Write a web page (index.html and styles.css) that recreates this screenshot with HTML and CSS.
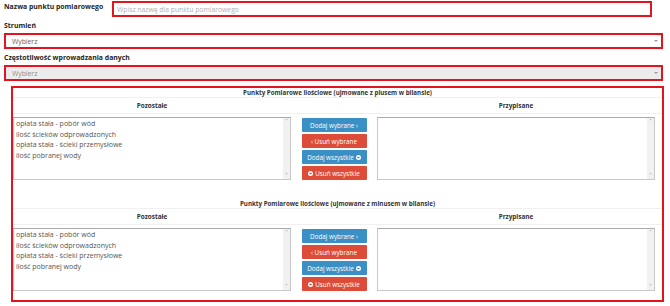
FILE: index.html
```html
<!DOCTYPE html>
<html lang="pl">
<head>
    <meta charset="UTF-8">
    <meta name="viewport" content="width=device-width, initial-scale=1.0">
    <title>Punkt pomiarowy</title>
    <link rel="stylesheet" href="styles.css">
</head>
<body>
    <div class="form">
        <div class="row-inline">
            <label class="lbl lbl-side" for="nazwa">Nazwa punktu pomiarowego</label>
            <input id="nazwa" class="text-input outlined" type="text" placeholder="Wpisz nazwę dla punktu pomiarowego">
        </div>

        <div class="field">
            <label class="lbl" for="strumien">Strumień</label>
            <div class="select-wrap outlined">
                <select id="strumien" class="select">
                    <option>Wybierz</option>
                </select>
            </div>
        </div>

        <div class="field">
            <label class="lbl" for="czestotliwosc">Częstotliwość wprowadzania danych</label>
            <div class="select-wrap outlined disabled">
                <select id="czestotliwosc" class="select" disabled>
                    <option>Wybierz</option>
                </select>
            </div>
        </div>

        <div class="dual-box outlined">
            <div class="section">
                <div class="section-title">Punkty Pomiarowe ilościowe (ujmowane z plusem w bilansie)</div>
                <div class="cols head">
                    <div>Pozostałe</div>
                    <div></div>
                    <div>Przypisane</div>
                </div>
                <div class="cols">
                    <div class="listbox">
                        <div class="items">
                            <div>opłata stała - pobór wód</div>
                            <div>ilość ścieków odprowadzonych</div>
                            <div>opłata stała - ścieki przemysłowe</div>
                            <div>ilość pobranej wody</div>
                        </div>
                        <div class="scrollbar"><span>&#708;</span><span>&#709;</span></div>
                    </div>
                    <div class="btns">
                        <button class="btn btn-blue">Dodaj wybrane &rsaquo;</button>
                        <button class="btn btn-red">&lsaquo; Usuń wybrane</button>
                        <button class="btn btn-blue">Dodaj wszystkie
                            <svg class="ico" viewBox="0 0 10 10"><circle cx="5" cy="5" r="5" fill="#fff"/><path d="M2.5 4.2h2.6V2.6L7.6 5 5.1 7.4V5.8H2.5z" fill="#3a8fc4"/></svg>
                        </button>
                        <button class="btn btn-red">
                            <svg class="ico" viewBox="0 0 10 10"><circle cx="5" cy="5" r="5" fill="#fff"/><path d="M7.5 4.2H4.9V2.6L2.4 5l2.5 2.4V5.8h2.6z" fill="#dd4b39"/></svg>
                            Usuń wszystkie</button>
                    </div>
                    <div class="listbox">
                        <div class="items"></div>
                        <div class="scrollbar"><span>&#708;</span><span>&#709;</span></div>
                    </div>
                </div>
            </div>

            <div class="section">
                <div class="section-title">Punkty Pomiarowe ilościowe (ujmowane z minusem w bilansie)</div>
                <div class="cols head">
                    <div>Pozostałe</div>
                    <div></div>
                    <div>Przypisane</div>
                </div>
                <div class="cols">
                    <div class="listbox">
                        <div class="items">
                            <div>opłata stała - pobór wód</div>
                            <div>ilość ścieków odprowadzonych</div>
                            <div>opłata stała - ścieki przemysłowe</div>
                            <div>ilość pobranej wody</div>
                        </div>
                        <div class="scrollbar"><span>&#708;</span><span>&#709;</span></div>
                    </div>
                    <div class="btns">
                        <button class="btn btn-blue">Dodaj wybrane &rsaquo;</button>
                        <button class="btn btn-red">&lsaquo; Usuń wybrane</button>
                        <button class="btn btn-blue">Dodaj wszystkie
                            <svg class="ico" viewBox="0 0 10 10"><circle cx="5" cy="5" r="5" fill="#fff"/><path d="M2.5 4.2h2.6V2.6L7.6 5 5.1 7.4V5.8H2.5z" fill="#3a8fc4"/></svg>
                        </button>
                        <button class="btn btn-red">
                            <svg class="ico" viewBox="0 0 10 10"><circle cx="5" cy="5" r="5" fill="#fff"/><path d="M7.5 4.2H4.9V2.6L2.4 5l2.5 2.4V5.8h2.6z" fill="#dd4b39"/></svg>
                            Usuń wszystkie</button>
                    </div>
                    <div class="listbox">
                        <div class="items"></div>
                        <div class="scrollbar"><span>&#708;</span><span>&#709;</span></div>
                    </div>
                </div>
            </div>
        </div>
    </div>
</body>
</html>
```

FILE: styles.css
```css
* {
    box-sizing: border-box;
}
body {
    margin: 0;
    padding: 1px 7px 0 4px;
    font-family: "Open Sans", "DejaVu Sans", sans-serif;
    font-size: 7px;
    color: #444;
    background: #fff;
}
.outlined {
    border: 2px solid #e3141e;
}
.lbl {
    display: block;
    font-weight: bold;
    color: #1e1e1e;
    line-height: 8px;
    font-size: 6.9px;
}
.row-inline {
    display: flex;
    align-items: flex-start;
}
.lbl-side {
    width: 108px;
    padding-top: 2px;
}
.text-input {
    width: 540px;
    height: 16px;
    padding: 0 3px;
    font-family: inherit;
    font-size: 6.8px;
    color: #555;
    background: #fff;
    outline: none;
}
.text-input::placeholder {
    color: #b0b0b0;
}
.field {
    margin-top: 5px;
}
.field .lbl {
    margin-bottom: 3px;
}
.select-wrap {
    position: relative;
    height: 16px;
    background: #fff;
}
.select-wrap.disabled {
    background: #ececec;
}
.select-wrap::after {
    content: "";
    position: absolute;
    right: 3px;
    top: 5px;
    border-left: 2px solid transparent;
    border-right: 2px solid transparent;
    border-top: 2px solid #999;
}
.select {
    appearance: none;
    -webkit-appearance: none;
    width: 100%;
    height: 100%;
    border: none;
    background: transparent;
    padding: 0 6px;
    font-family: inherit;
    font-size: 6.8px;
    color: #666;
    outline: none;
}
.dual-box {
    margin: 5px -1px 0 7px;
    padding-bottom: 9px;
}
.section + .section {
    margin-top: 19px;
}
.section-title {
    text-align: center;
    font-weight: bold;
    font-size: 6.2px;
    color: #333;
    line-height: 9px;
    border-bottom: 1px solid #f0f0f0;
}
.cols {
    display: grid;
    grid-template-columns: 278px 86px 278px;
}
.head {
    text-align: center;
    font-weight: bold;
    font-size: 6.4px;
    color: #333;
    line-height: 15px;
    border-bottom: 1px solid #f0f0f0;
    margin-bottom: 3px;
}
.listbox {
    display: flex;
    height: 63px;
    border: 1px solid #c8c8c8;
    border-top-color: #aaa;
    background: #fff;
}
.items {
    flex: 1;
    padding: 1px 2px 0;
    line-height: 10.5px;
    color: #555;
}
.scrollbar {
    width: 7px;
    background: #f1f1f1;
    display: flex;
    flex-direction: column;
    justify-content: space-between;
    align-items: center;
    font-size: 5px;
    line-height: 7px;
    color: #777;
}
.btns {
    display: flex;
    flex-direction: column;
    align-items: center;
    gap: 2px;
    padding-top: 1px;
}
.btn {
    width: 65px;
    height: 14px;
    border: none;
    border-radius: 1px;
    padding: 0;
    font-family: inherit;
    font-size: 6.3px;
    color: #fff;
    display: flex;
    align-items: center;
    justify-content: center;
    gap: 2px;
}
.btn-blue {
    background: #3a8fc4;
}
.btn-red {
    background: #dd4b39;
}
.ico {
    width: 5px;
    height: 5px;
}
```
